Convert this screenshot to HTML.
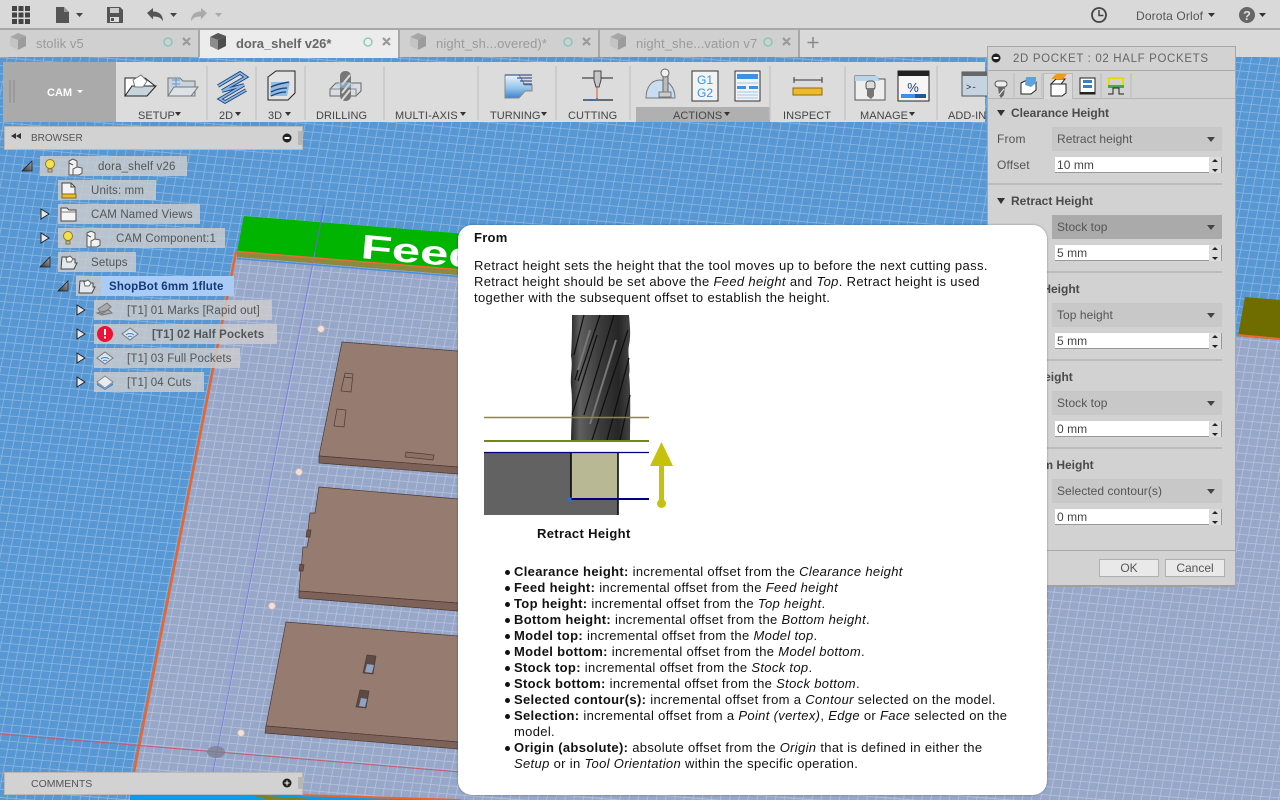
<!DOCTYPE html>
<html><head><meta charset="utf-8"><style>
html,body{margin:0;padding:0;width:1280px;height:800px;overflow:hidden;background:#5797d3}
body{font-family:"Liberation Sans",sans-serif;position:relative}
.a,.t{position:absolute}
.t{white-space:nowrap;line-height:16px;font-size:12px;color:#555;letter-spacing:.15px;margin-top:1px}
.tb{font-size:11px;color:#444;letter-spacing:.05px;top:107px}
.tt{font-size:13px;color:#9a9a9a;letter-spacing:.1px;top:35px}
.br{font-size:11.5px;letter-spacing:.15px}
svg.l{position:absolute;left:0;top:0;width:1280px;height:800px}
.r{position:absolute;height:20px;background:rgba(205,205,205,.82)}
.h{position:absolute;left:474px;white-space:nowrap;font-size:13px;line-height:16px;color:#111;letter-spacing:.34px;margin-top:1px}
.b{position:absolute;left:514px;white-space:nowrap;font-size:13px;line-height:16px;color:#111;letter-spacing:.33px;margin-top:1px}
.b:not(.n):before{content:"";position:absolute;left:-9px;top:6px;width:5px;height:5px;border-radius:50%;background:#111}
.dd{position:absolute;left:1052px;width:170px;height:24px;background:#c8c8c8}
.dd span{position:absolute;left:5px;top:4px;font-size:12px;line-height:16px;color:#555;letter-spacing:.05px}
.dd:after{content:"";position:absolute;right:7px;top:10px;border:4px solid transparent;border-top:5px solid #444;border-bottom:0}
.in{position:absolute;left:1055px;width:154px;height:15px;background:#fff;border-bottom:1px solid #999;font-size:12px;line-height:16px;color:#444;letter-spacing:.05px;text-indent:2px}
.sp{position:absolute;left:1209px;width:13px;height:16px;background:#ddd;border-right:1px solid #999;box-sizing:border-box}
.sp:before{content:"";position:absolute;left:3px;top:2px;border:3px solid transparent;border-bottom:3px solid #222;border-top:0}
.sp:after{content:"";position:absolute;left:3px;bottom:1px;border:3px solid transparent;border-top:3px solid #222;border-bottom:0}
.dv{position:absolute;left:988px;width:234px;height:2px;background:#bbb}
.sh{position:absolute;font-weight:bold;font-size:12px;line-height:16px;color:#4a4a4a;white-space:nowrap}
.tri{position:absolute;left:997px;border:4.5px solid transparent;border-top:6px solid #333;border-bottom:0}
.btn{position:absolute;top:559px;width:60px;height:18px;background:#e9e9e9;border:1px solid #b0b0b0;box-sizing:border-box;text-align:center;font-size:12px;line-height:17px;color:#555}
</style></head><body>

<svg class="l" viewBox="0 0 1280 800">
<defs>
<pattern id="g" width="9" height="8" patternUnits="userSpaceOnUse" patternTransform="matrix(1 .083 -.198 1 0 0)">
<path d="M0 .5H9M.5 0V8" stroke="#fff" stroke-opacity=".3" stroke-width=".8" fill="none"/>
</pattern>
</defs>
<rect width="1280" height="800" fill="#5797d3"/>
<polygon points="236,252 1280,340 1280,800 128,800" fill="#97a7c9"/>
<rect width="1280" height="800" fill="url(#g)"/>
<polygon points="244,216 1000,277 1000,320 237,252" fill="#00b400"/>
<polygon points="1245,297 1280,300 1280,340 1238,336" fill="#6f6c00"/>
<polygon points="237,252 470,271 470,276 237,257" fill="#8d8a3c"/>
<path d="M237 258.500L470 277.500" stroke="#4a90d8" stroke-width="1.500"/>
<path d="M237 251.500L470 270.500" stroke="#ee6a3a" stroke-width="1.500"/>
<path d="M1238 335L1280 339" stroke="#ea6a33" stroke-width="2"/>
<path d="M236 252L134 772" stroke="#ee6428" stroke-width="2.500" fill="none"/>
<path d="M315 252L213 772" stroke="#7f7fe0" stroke-width="1" fill="none"/>
<path d="M324 205L315 252" stroke="#5c6fd8" stroke-width="1" fill="none"/>
<path d="M0 734L460 772" stroke="#c9596f" stroke-width="1" fill="none"/>
<ellipse cx="216" cy="752" rx="9" ry="6" fill="#7a7f90" fill-opacity=".75"/>
<text font-family="Liberation Sans" font-weight="bold" font-size="34" fill="#fff" transform="translate(360 258) rotate(5) scale(1.5 1)">Feed</text>
<g fill="#f1e3dc" stroke="#c9b4ad"><circle cx="321" cy="329" r="3.500"/><circle cx="299" cy="472" r="3.500"/><circle cx="272" cy="606" r="3.500"/><circle cx="241" cy="733" r="3.500"/></g>
<g stroke="#4d3a34" stroke-width=".7">
<polygon points="342,342 470,352 470,468 319,456" fill="#967c70"/>
<polygon points="319,456 470,468 470,475 319,463" fill="#7d6259"/>
<polygon points="319,487 470,500 470,604 299,591 303,547 307,547 309,537 307,537 310,513 315,513" fill="#967c70"/>
<polygon points="299,591 470,604 470,612 299,598" fill="#7d6259"/>
<polygon points="307,530 311,530 310,537 306,537" fill="#6d5249"/>
<polygon points="300,564 304,565 303,571 299,571" fill="#6d5249"/>
<polygon points="286,622 470,637 470,743 266,726" fill="#967c70"/>
<polygon points="266,726 470,743 470,750 265,733" fill="#7d6259"/>
<polygon points="345,373 353,374 351,392 341,391" fill="none"/><path d="M344 377L352 378" fill="none"/>
<polygon points="337,409 346,410 344,427 334,426" fill="none"/>
<polygon points="406,452 434,455 433,460 405,457" fill="#8a7065"/>
<polygon points="367,655 376,656 373,674 363,673" fill="#5d4a44"/><polygon points="367,664 374,665 372,673 365,672" fill="#8fa3c5" stroke="none"/>
<polygon points="360,690 369,691 366,708 356,707" fill="#5d4a44"/><polygon points="361,698 367,699 365,707 359,706" fill="#8fa3c5" stroke="none"/>
</g>
<polygon points="130,795 300,795 470,800 130,800" fill="#049ef0"/>
<polygon points="250,795 300,798 320,800 270,800" fill="#7d8320"/>
<path d="M300 795L460 800" stroke="#ee6428" stroke-width="2"/>
</svg>

<!-- top bar -->
<div class="a" style="left:0;top:0;width:1280px;height:28px;background:#d9d9d9"></div>
<div class="a" style="left:0;top:28px;width:1280px;height:2px;background:#a8a8a8"></div>
<div class="a" style="left:0;top:30px;width:1280px;height:27px;background:#d9d9d9"></div>
<div class="a" style="left:0;top:30px;width:199px;height:27px;background:#d0d0d0"></div>
<div class="a" style="left:199px;top:30px;width:199px;height:28px;background:#ececec"></div>
<div class="a" style="left:399px;top:30px;width:199px;height:27px;background:#d0d0d0"></div>
<div class="a" style="left:599px;top:30px;width:199px;height:27px;background:#d0d0d0"></div>
<div class="a" style="left:198px;top:30px;width:2px;height:27px;background:#a8a8a8"></div>
<div class="a" style="left:398px;top:30px;width:2px;height:27px;background:#a8a8a8"></div>
<div class="a" style="left:598px;top:30px;width:2px;height:27px;background:#a8a8a8"></div>
<div class="a" style="left:798px;top:30px;width:2px;height:27px;background:#a8a8a8"></div>
<div class="t tt" style="left:36px">stolik v5</div>
<div class="t tt" style="left:236px;color:#666;font-weight:bold;letter-spacing:-.05px">dora_shelf v26*</div>
<div class="t tt" style="left:436px">night_sh...overed)*</div>
<div class="t tt" style="left:636px">night_she...vation v7</div>
<div class="t" style="left:1136px;top:7px;color:#555">Dorota Orlof</div>

<!-- toolbar -->
<div class="a" style="left:3px;top:62px;width:982px;height:60px;background:#dcdcdc"></div>
<div class="a" style="left:3px;top:62px;width:113px;height:60px;background:#aaa"></div>
<div class="a" style="left:636px;top:107px;width:134px;height:15px;background:#b0b0b0"></div>
<div class="t" style="left:47px;top:84px;font-size:11px;font-weight:bold;color:#fff;letter-spacing:0">CAM</div>
<div class="t tb" style="left:138px">SETUP</div>
<div class="t tb" style="left:219px">2D</div>
<div class="t tb" style="left:268px">3D</div>
<div class="t tb" style="left:316px">DRILLING</div>
<div class="t tb" style="left:395px;letter-spacing:.2px">MULTI-AXIS</div>
<div class="t tb" style="left:490px">TURNING</div>
<div class="t tb" style="left:568px">CUTTING</div>
<div class="t tb" style="left:673px">ACTIONS</div>
<div class="t tb" style="left:783px">INSPECT</div>
<div class="t tb" style="left:860px">MANAGE</div>
<div class="t tb" style="left:948px">ADD-INS</div>

<svg class="l" viewBox="0 0 1280 800">
<!-- grid menu -->
<g fill="#444"><rect x="12" y="6" width="5" height="5"/><rect x="18.500" y="6" width="5" height="5"/><rect x="25" y="6" width="5" height="5"/><rect x="12" y="12.500" width="5" height="5"/><rect x="18.500" y="12.500" width="5" height="5"/><rect x="25" y="12.500" width="5" height="5"/><rect x="12" y="19" width="5" height="5"/><rect x="18.500" y="19" width="5" height="5"/><rect x="25" y="19" width="5" height="5"/></g>
<path d="M56 7h8l5 5v11H56z" fill="#555"/><path d="M64 7v5h5" fill="#999"/>
<path d="M76 13h7l-3.500 4z" fill="#444"/>
<path d="M107 7h13l3 3v13h-16z" fill="#555"/><rect x="110" y="8" width="9" height="5" fill="#ccc"/><rect x="110" y="17" width="9" height="5" fill="#ddd"/><rect x="111" y="18" width="3" height="3" fill="#555"/>
<path d="M147 13l6-5v3.500c6 0 10 3 10 10-2-4-5-5-10-5v3z" fill="#555"/><path d="M170 13h7l-3.500 4z" fill="#444"/>
<path d="M207 13l-6-5v3.500c-6 0-10 3-10 10 2-4 5-5 10-5v3z" fill="#aaa"/><path d="M215 13h7l-3.500 4z" fill="#aaa"/>
<circle cx="1099" cy="15" r="7" fill="none" stroke="#444" stroke-width="1.800"/><path d="M1099 10v5.500h4.500" fill="none" stroke="#444" stroke-width="1.500"/>
<path d="M1208 13h7l-3.500 4z" fill="#333"/>
<circle cx="1247" cy="15" r="8" fill="#666"/><text x="1247" y="20" font-family="Liberation Sans" font-weight="bold" font-size="13" fill="#ddd" text-anchor="middle">?</text><path d="M1259 13h7l-3.500 4z" fill="#333"/>
<!-- tab cubes -->
<g><path d="M10 37l8-4 8 3-8 4z" fill="#a6a6a6"/><path d="M10 37l8 3v10l-8-4z" fill="#c4c4c4"/><path d="M18 40l8-4v10l-8 4z" fill="#9c9c9c"/></g>
<g transform="translate(400 0)"><path d="M10 37l8-4 8 3-8 4z" fill="#a6a6a6"/><path d="M10 37l8 3v10l-8-4z" fill="#c4c4c4"/><path d="M18 40l8-4v10l-8 4z" fill="#9c9c9c"/></g>
<g transform="translate(600 0)"><path d="M10 37l8-4 8 3-8 4z" fill="#a6a6a6"/><path d="M10 37l8 3v10l-8-4z" fill="#c4c4c4"/><path d="M18 40l8-4v10l-8 4z" fill="#9c9c9c"/></g>
<g transform="translate(200 0)"><path d="M10 37l8-4 8 3-8 4z" fill="#555"/><path d="M10 37l8 3v10l-8-4z" fill="#8c8c8c"/><path d="M18 40l8-4v10l-8 4z" fill="#4e4e4e"/></g>
<g fill="none" stroke="#7fc8b4" stroke-width="1.300"><circle cx="168" cy="42" r="4"/><circle cx="368" cy="42" r="4"/><circle cx="568" cy="42" r="4"/><circle cx="768" cy="42" r="4"/></g>
<g stroke="#999" stroke-width="2.200"><path d="M183 38l7 7M190 38l-7 7M383 38l7 7M390 38l-7 7M583 38l7 7M590 38l-7 7M783 38l7 7M790 38l-7 7"/></g>
<path d="M813 37v11M807.500 42.500h11" stroke="#888" stroke-width="1.500"/>
<!-- toolbar seps -->
<g stroke="#c6c6c6" stroke-width="1.500"><path d="M207 66v54M256 66v54M305 66v54M384 66v54M478 66v54M556 66v54M630 66v54M770 66v54M845 66v54M937 66v54"/></g>
<path d="M10 80v23M14 80v23" stroke="#8c8c8c"/>
<path d="M77 90h6l-3 3z" fill="#fff"/>
<g fill="#333"><path d="M175 112h6l-3 4z"/><path d="M235 112h6l-3 4z"/><path d="M285 112h6l-3 4z"/><path d="M460 112h6l-3 4z"/><path d="M541 112h6l-3 4z"/><path d="M724 112h6l-3 4z"/><path d="M909 112h6l-3 4z"/></g>
<!-- setup -->
<path d="M125 78h20l10 8-8 10h-22z" fill="#fff" stroke="#222"/><path d="M125 96l7-10h24l-9 10z" fill="#c8d4dc" stroke="#222"/><path d="M133 80l8-5 6 6-4 6h-8z" fill="#fff" stroke="#777"/>
<path d="M168 78h12l3 3h12v15h-27z" fill="#c9d3db" stroke="#777"/><path d="M168 96l6-9h24l-7 9z" fill="#dde2e6" stroke="#777"/><path d="M172 80h8M172 84h8M176 78v9" stroke="#5b9bd8"/>
<!-- 2D -->
<path d="M218 86l22-13 6 4-24 14M222 91l22-6-24 14 5 3 21-12" fill="none" stroke="#1d4077" stroke-width="3.500"/>
<path d="M218 86l22-13 6 4-24 14M222 91l22-6-24 14 5 3 21-12" fill="none" stroke="#8ab6e4" stroke-width="1.800"/>
<!-- 3D -->
<path d="M268 77l8-6h19v22l-7 7h-20z" fill="#e3e3e3" stroke="#222"/><path d="M271 82h19l-3 14h-17z" fill="#8fbde8"/>
<path d="M271 87c6-3 13-4 18-5M271 92c6-3 12-4 16-4M271 96c6-3 10-4 15-4" fill="none" stroke="#1d3f74" stroke-width="1.300"/>
<!-- drilling -->
<path d="M330 89l6-6h25v8l-5 5h-26z" fill="#d7dde2" stroke="#666"/><path d="M330 89h26v7" fill="none" stroke="#888"/>
<rect x="340" y="71" width="11" height="30" rx="5" fill="#777"/><path d="M342 85l8-10M342 93l8-10M342 100l8-10" stroke="#ddd" stroke-width="2"/><ellipse cx="345" cy="85" rx="9" ry="3" fill="#a8cdee" fill-opacity=".5"/>
<!-- turning -->
<defs><linearGradient id="b1" x1="0" y1="0" x2="0" y2="1"><stop offset="0" stop-color="#eef5fb"/><stop offset=".6" stop-color="#8fc0ea"/><stop offset="1" stop-color="#3f82cc"/></linearGradient></defs>
<path d="M505 75h14l6 10h7v6h-7l-6 7h-14z" fill="url(#b1)" stroke="#888"/><path d="M505 75h27M517 78h15M520 81h12M523 84h9" stroke="#1c3a78"/>
<!-- cutting -->
<path d="M582 78h31M597 87v12" stroke="#222"/><path d="M594 71h7v9l-2 7h-3l-2-7z" fill="#c6c6c6" stroke="#444"/><path d="M597 87v11" stroke="#e05030"/><rect x="583" y="99" width="30" height="2" fill="#5f6c7a"/><rect x="590" y="99" width="3" height="2" fill="#2472c8"/>
<!-- joystick -->
<path d="M646 98c0-10 5-18 14-18s15 8 15 18z" fill="#c9ddf0" stroke="#777"/><rect x="663" y="72" width="5" height="22" fill="#bbb" stroke="#666"/><circle cx="665" cy="73" r="4" fill="#f0f0f0" stroke="#666"/><rect x="659" y="92" width="12" height="5" fill="#ccc" stroke="#777"/>
<rect x="692" y="71" width="26" height="30" fill="#f3f3f3" stroke="#333"/>
<text x="705" y="84" font-family="Liberation Sans" font-size="12" fill="#3a92e8" text-anchor="middle">G1</text><text x="705" y="97" font-family="Liberation Sans" font-size="12" fill="#3a92e8" text-anchor="middle">G2</text>
<rect x="735" y="71" width="25" height="30" fill="#f3f3f3" stroke="#333"/><rect x="737" y="74" width="21" height="5" fill="#3a92e8"/><path d="M737 83h21" stroke="#9cc8ee"/><rect x="737" y="86" width="9" height="3" fill="#3a92e8"/><rect x="749" y="86" width="9" height="3" fill="#3a92e8"/><path d="M737 92h21M737 95h21M737 98h21" stroke="#9cc8ee"/>
<!-- inspect -->
<path d="M794 80h28M794 77v6M822 77v6" stroke="#333"/><rect x="793" y="88" width="29" height="7" fill="#f0b92b" stroke="#8a6a10"/>
<!-- manage -->
<path d="M855 76h20l4 3h6v21h-30z" fill="#eee" stroke="#555"/><path d="M855 76h22l3 5h-25z" fill="#b8d5ec"/><rect x="866" y="81" width="9" height="9" rx="3" fill="#ddd" stroke="#555"/><path d="M867 88h7v8l-3 3-4-3z" fill="#777"/>
<rect x="898" y="71" width="31" height="30" fill="#f6f6f6" stroke="#222"/><rect x="898" y="71" width="31" height="5" fill="#222"/><text x="913" y="92" font-family="Liberation Sans" font-size="13" fill="#1d3f74" text-anchor="middle">%</text><rect x="901" y="94" width="14" height="4" fill="#3a92e8"/><rect x="915" y="94" width="11" height="4" fill="#1d5a9a"/>
<rect x="962" y="72" width="26" height="24" fill="#c5d4e0" stroke="#555"/><rect x="962" y="72" width="26" height="4" fill="#666"/><text x="966" y="90" font-family="Liberation Mono" font-size="9" fill="#222">&gt;-</text>
</svg>

<!-- browser -->
<div class="a" style="left:4px;top:126px;width:299px;height:24px;background:#d2d2d2;border:1px solid #b8b8b8;box-sizing:border-box"></div>
<div class="t" style="left:31px;top:130px;font-size:10px;color:#555;letter-spacing:0">BROWSER</div>
<div class="r" style="left:40px;top:156px;width:147px"></div>
<div class="r" style="left:58px;top:180px;width:98px"></div>
<div class="r" style="left:58px;top:204px;width:142px"></div>
<div class="r" style="left:58px;top:228px;width:167px"></div>
<div class="r" style="left:58px;top:252px;width:78px"></div>
<div class="r" style="left:76px;top:276px;width:25px"></div>
<div class="r" style="left:101px;top:276px;width:133px;background:#a9cbf6"></div>
<div class="r" style="left:94px;top:300px;width:178px"></div>
<div class="r" style="left:94px;top:324px;width:183px"></div>
<div class="r" style="left:94px;top:348px;width:146px"></div>
<div class="r" style="left:94px;top:372px;width:110px"></div>
<div class="t br" style="left:98px;top:158px">dora_shelf v26</div>
<div class="t br" style="left:91px;top:182px">Units: mm</div>
<div class="t br" style="left:91px;top:206px">CAM Named Views</div>
<div class="t br" style="left:116px;top:230px">CAM Component:1</div>
<div class="t br" style="left:91px;top:254px">Setups</div>
<div class="t br" style="left:109px;top:278px;font-weight:bold;color:#123a78">ShopBot 6mm 1flute</div>
<div class="t br" style="left:127px;top:302px">[T1] 01 Marks [Rapid out]</div>
<div class="t br" style="left:152px;top:326px;font-weight:bold">[T1] 02 Half Pockets</div>
<div class="t br" style="left:127px;top:350px">[T1] 03 Full Pockets</div>
<div class="t br" style="left:127px;top:374px">[T1] 04 Cuts</div>

<svg class="l" viewBox="0 0 1280 800">
<path d="M11 136l5-3v6zM16 136l5-3v6z" fill="#333"/>
<circle cx="287" cy="138" r="4.500" fill="#222"/><rect x="284.500" y="137" width="5" height="2" fill="#fff"/>
<path d="M299 131v14M301 131v14" stroke="#999"/>
<defs><linearGradient id="tr" x1="0" y1="1" x2="1" y2="0"><stop offset="0" stop-color="#333"/><stop offset="1" stop-color="#aaa"/></linearGradient></defs>
<g fill="url(#tr)" stroke="#222" stroke-width=".8"><path d="M22 171h10v-10z"/><path d="M40 267h10v-10z"/><path d="M58 291h10v-10z"/></g>
<g fill="#e8e8e8" stroke="#222"><path d="M41 209l8 5-8 5z"/><path d="M41 233l8 5-8 5z"/><path d="M77 305l8 5-8 5z"/><path d="M77 329l8 5-8 5z"/><path d="M77 353l8 5-8 5z"/><path d="M77 377l8 5-8 5z"/></g>
<g stroke="#8a7a30"><circle cx="50" cy="164" r="4.500" fill="#f4e04a"/><rect x="48" y="169" width="4" height="3" fill="#bbb"/><circle cx="68" cy="236" r="4.500" fill="#f4e04a"/><rect x="66" y="241" width="4" height="3" fill="#bbb"/></g>
<g fill="#f2f2f2" stroke="#555"><path d="M69 161l4-2 4 2v6l5 1v5l-3 2H69z"/><path d="M77 161v6l-4 2v6M69 163l4 2"/></g>
<g fill="#f2f2f2" stroke="#555" transform="translate(18 72)"><path d="M69 161l4-2 4 2v6l5 1v5l-3 2H69z"/><path d="M77 161v6l-4 2v6M69 163l4 2"/></g>
<path d="M62 183h9l4 4v9H62z" fill="#f4f4f4" stroke="#444"/><path d="M71 183v4h4" fill="none" stroke="#444"/>
<rect x="62" y="194" width="14" height="4" fill="#f0b92b" stroke="#8a6a10"/>
<path d="M61 208h6l2 2h7v11H61z" fill="#f4f4f4" stroke="#444"/><path d="M61 212h15" stroke="#777"/>
<g fill="#e4e9ed" stroke="#444"><path d="M62 257h6l2 2h5v4h2l-3 6H61z"/><path d="M80 281h6l2 2h5v4h2l-3 6H79z"/></g>
<g fill="#fff" stroke="#666"><path d="M66 258l4-2 3 3-2 3h-4z"/><path d="M84 282l4-2 3 3-2 3h-4z"/></g>
<path d="M98 309l9-6 4 4-9 7zM97 313l12-3 3 3-10 2z" fill="#aaa" stroke="#777"/>
<circle cx="105" cy="334" r="8" fill="#ee1133"/><rect x="104" y="329" width="2" height="6" fill="#fff"/><rect x="104" y="336.500" width="2" height="2" fill="#fff"/>
<g fill="#dce3ea" stroke="#777"><path d="M122 334l8-6 8 6-8 6z"/><path d="M97 358l8-6 8 6-8 6z"/></g>
<g fill="none" stroke="#3a88d8"><path d="M126 335c2-2 6-2 8 0M128 337c1-1 3-1 4 0M101 359c2-2 6-2 8 0M103 361c1-1 3-1 4 0"/></g>
<path d="M97 382l8-6 8 6-8 6z" fill="#e8ecf0" stroke="#888"/><path d="M97 383l8 6 8-6v2l-8 5-8-5z" fill="#3a88d8"/>
</svg>

<!-- comments -->
<div class="a" style="left:4px;top:772px;width:299px;height:23px;background:#d2d2d2;border:1px solid #b8b8b8;box-sizing:border-box"></div>
<div class="t" style="left:31px;top:775px;font-size:10.500px;color:#555;letter-spacing:0">COMMENTS</div>
<svg class="l" viewBox="0 0 1280 800"><circle cx="287" cy="783" r="4.500" fill="#222"/><path d="M284.500 783h5M287 780.500v5" stroke="#fff"/><path d="M299 777v12M301 777v12" stroke="#999"/></svg>

<!-- dialog -->
<div class="a" style="left:987px;top:46px;width:249px;height:541px;background:#d2d2d2;border:1px solid #a6a6a6;border-bottom:2px solid #a0a0a0;box-sizing:border-box"></div>
<div class="a" style="left:988px;top:70px;width:247px;height:1px;background:#aaa"></div>
<div class="a" style="left:988px;top:98px;width:247px;height:1px;background:#b5b5b5"></div>
<div class="a" style="left:1043px;top:73px;width:30px;height:26px;background:#d9d9d9;border:1px solid #bbb;border-bottom:0;box-sizing:border-box"></div>
<div class="t" style="left:1013px;top:50px;font-size:11.500px;color:#666;letter-spacing:.65px">2D POCKET : 02 HALF POCKETS</div>
<svg class="l" viewBox="0 0 1280 800">
<circle cx="996" cy="58" r="4.500" fill="#222"/><rect x="993.500" y="57" width="5" height="2" fill="#fff"/>
<path d="M1014 73v24M1042 73v24M1101 73v24M1131 73v24" stroke="#bbb"/>
<rect x="995" y="81" width="12" height="6" rx="3" fill="#eee" stroke="#555"/><path d="M998 87h7l-1 8-3 3-2-3z" fill="#666"/><path d="M999 95l5-6" stroke="#eee"/>
<path d="M1021 83l8-4h5l2 3v8l-5 4h-10v-8z" fill="#fff" stroke="#222"/><path d="M1026 77h10v6l-5 4-6-2z" fill="#5ea3e0"/>
<path d="M1051 84h15v9l-4 3h-11z" fill="#fff" stroke="#222"/><path d="M1051 84l5-5h9l-4 5z" fill="#fff" stroke="#222"/><path d="M1051 79l5-5h11l-4 5z" fill="#f09a1c"/>
<rect x="1080" y="78" width="15" height="16" fill="#fff" stroke="#222"/><rect x="1083" y="80" width="9" height="3" fill="#3a7fc4"/><rect x="1083" y="85" width="9" height="3" fill="#3a7fc4"/><path d="M1080 93h15" stroke="#222" stroke-width="2"/>
<path d="M1109 85v-7h14v7" fill="none" stroke="#e6dc00" stroke-width="2"/><rect x="1108" y="85" width="16" height="3" fill="#46a84a"/><path d="M1108 94h5v-6h6v6h5" fill="none" stroke="#222"/>
</svg>
<div class="tri" style="top:110px"></div>
<div class="sh" style="left:1011px;top:105px">Clearance Height</div>
<div class="t" style="left:997px;top:130px">From</div>
<div class="dd" style="top:127px"><span>Retract height</span></div>
<div class="t" style="left:997px;top:156px">Offset</div>
<div class="in" style="top:157px">10 mm</div><div class="sp" style="top:157px"></div>
<div class="dv" style="top:183px"></div>
<div class="tri" style="top:198px"></div>
<div class="sh" style="left:1011px;top:193px">Retract Height</div>
<div class="dd" style="top:215px;background:#aaa"><span>Stock top</span></div>
<div class="in" style="top:245px">5 mm</div><div class="sp" style="top:245px"></div>
<div class="dv" style="top:271px"></div>
<div class="dd" style="top:303px"><span>Top height</span></div>
<div class="in" style="top:333px">5 mm</div><div class="sp" style="top:333px"></div>
<div class="dv" style="top:359px"></div>
<div class="dd" style="top:391px"><span>Stock top</span></div>
<div class="in" style="top:421px">0 mm</div><div class="sp" style="top:421px"></div>
<div class="dv" style="top:447px"></div>
<div class="dd" style="top:479px"><span>Selected contour(s)</span></div>
<div class="in" style="top:509px">0 mm</div><div class="sp" style="top:509px"></div>
<div class="sh" style="left:1011px;top:281px">Feed Height</div>
<div class="sh" style="left:1011px;top:369px">Top Height</div>
<div class="sh" style="left:1011px;top:457px">Bottom Height</div>
<div class="a" style="left:988px;top:550px;width:247px;height:1px;background:#aaa"></div>
<div class="btn" style="left:1099px">OK</div>
<div class="btn" style="left:1165px">Cancel</div>

<!-- help -->
<div class="a" style="left:458px;top:225px;width:589px;height:570px;background:#fff;border-radius:14px;box-shadow:0 0 2px rgba(0,0,0,.35)"></div>
<div class="h" style="top:229px;font-weight:bold;letter-spacing:.25px">From</div>
<div class="h" style="top:257px;letter-spacing:.37px">Retract height sets the height that the tool moves up to before the next cutting pass.</div>
<div class="h" style="top:273px">Retract height should be set above the <i>Feed height</i> and <i>Top</i>. Retract height is used</div>
<div class="h" style="top:289px">together with the subsequent offset to establish the height.</div>
<svg class="l" viewBox="0 0 1280 800">
<defs><linearGradient id="tg" x1="0" x2="1"><stop offset="0" stop-color="#2a2a2a"/><stop offset=".15" stop-color="#5f5f5f"/><stop offset=".5" stop-color="#3a3a3a"/><stop offset=".8" stop-color="#262626"/><stop offset="1" stop-color="#444"/></linearGradient></defs>
<path d="M572 315h57c1 12 2 20 0 30-2 10 2 20 0 30 2 15 1 50 1 66h-59c0-16 2-40 0-55-1-10 2-20 0-30 1-15 1-30 1-41z" fill="url(#tg)"/>
<g stroke="#0e0e0e" stroke-width="1.200" fill="none"><path d="M584 315l-10 40M600 315l-22 66M614 315l-30 100M628 330l-36 110M629 358l-22 82M630 395l-10 45M575 380l15-50M572 415l25-80"/></g>
<g stroke="#777" stroke-width="2" fill="none"><path d="M590 330l-12 40M616 340l-26 84"/></g>
<rect x="484" y="453" width="134" height="62" fill="#626262"/>
<rect x="571" y="453" width="47" height="46" fill="#b8b894"/>
<path d="M571 453v46M618 453v62" stroke="#000" stroke-width="1.500"/>
<path d="M484 417.500h165" stroke="#8c8c22" stroke-width="1.500"/>
<path d="M484 441h165" stroke="#6e8a12" stroke-width="2"/>
<path d="M484 452.500h165" stroke="#00007e" stroke-width="1.300"/>
<path d="M571 499h78" stroke="#00007e" stroke-width="2"/>
<rect x="568" y="497.500" width="3.500" height="3.500" fill="#2a6cf0"/>
<path d="M661.500 442l-11.500 24h23z" fill="#c4c20c"/><rect x="659" y="465" width="5" height="36" fill="#c4c20c"/><circle cx="661.500" cy="503.500" r="4.500" fill="#c4c20c"/>
</svg>
<div class="h" style="left:537px;top:525px;font-weight:bold">Retract Height</div>
<div class="b" style="top:563px"><b>Clearance height:</b> incremental offset from the <i>Clearance height</i></div>
<div class="b" style="top:579px"><b>Feed height:</b> incremental offset from the <i>Feed height</i></div>
<div class="b" style="top:595px"><b>Top height:</b> incremental offset from the <i>Top height</i>.</div>
<div class="b" style="top:611px"><b>Bottom height:</b> incremental offset from the <i>Bottom height</i>.</div>
<div class="b" style="top:627px"><b>Model top:</b> incremental offset from the <i>Model top</i>.</div>
<div class="b" style="top:643px"><b>Model bottom:</b> incremental offset from the <i>Model bottom</i>.</div>
<div class="b" style="top:659px"><b>Stock top:</b> incremental offset from the <i>Stock top</i>.</div>
<div class="b" style="top:675px"><b>Stock bottom:</b> incremental offset from the <i>Stock bottom</i>.</div>
<div class="b" style="top:691px"><b>Selected contour(s):</b> incremental offset from a <i>Contour</i> selected on the model.</div>
<div class="b" style="top:707px"><b>Selection:</b> incremental offset from a <i>Point (vertex)</i>, <i>Edge</i> or <i>Face</i> selected on the</div>
<div class="b n" style="top:723px">model.</div>
<div class="b" style="top:739px"><b>Origin (absolute):</b> absolute offset from the <i>Origin</i> that is defined in either the</div>
<div class="b n" style="top:755px"><i>Setup</i> or in <i>Tool Orientation</i> within the specific operation.</div>
</body></html>
